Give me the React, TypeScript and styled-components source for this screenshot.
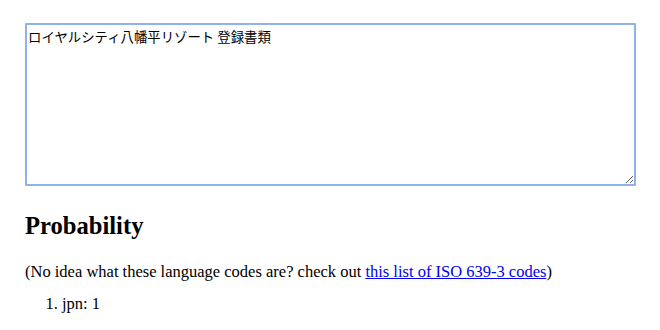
import styled, { createGlobalStyle } from "styled-components";

const GlobalStyle = createGlobalStyle`
    body {
        margin: 0;
        background: #ffffff;
        font-family: "Liberation Serif", "Times New Roman", serif;
        font-size: 16.5px;
        color: #000000;
    }
`;

const Page = styled.div`
    padding: 23px 25px 0 25px;
`;

const InputBox = styled.textarea`
    display: block;
    box-sizing: border-box;
    width: 611px;
    height: 163px;
    margin: 0;
    padding: 3px 1px;
    border: 2px solid #8fb2ec;
    border-radius: 1px;
    outline: none;
    font-family: "Noto Sans CJK JP", "Noto Sans", sans-serif;
    font-size: 13.4px;
    line-height: 16px;
    color: #000000;
    resize: both;
`;

const Heading = styled.h2`
    margin: 26px 0 0 0;
    font-size: 24.6px;
    font-weight: bold;
    line-height: 28px;
`;

const Note = styled.p`
    margin: 23px 0 0 0;
    line-height: 18px;

    a {
        color: #0000ee;
        text-decoration: underline;
    }
`;

const Results = styled.ol`
    margin: 14px 0 0 0;
    padding-left: 37px;
    line-height: 18px;
`;

export default function App() {
    return (
        <>
            <GlobalStyle />
            <Page>
                <InputBox defaultValue="ロイヤルシティ八幡平リゾート 登録書類" />
                <Heading>Probability</Heading>
                <Note>
                    (No idea what these language codes are? check out{" "}
                    <a href="#">this list of ISO 639-3 codes</a>)
                </Note>
                <Results>
                    <li>jpn: 1</li>
                </Results>
            </Page>
        </>
    );
}
